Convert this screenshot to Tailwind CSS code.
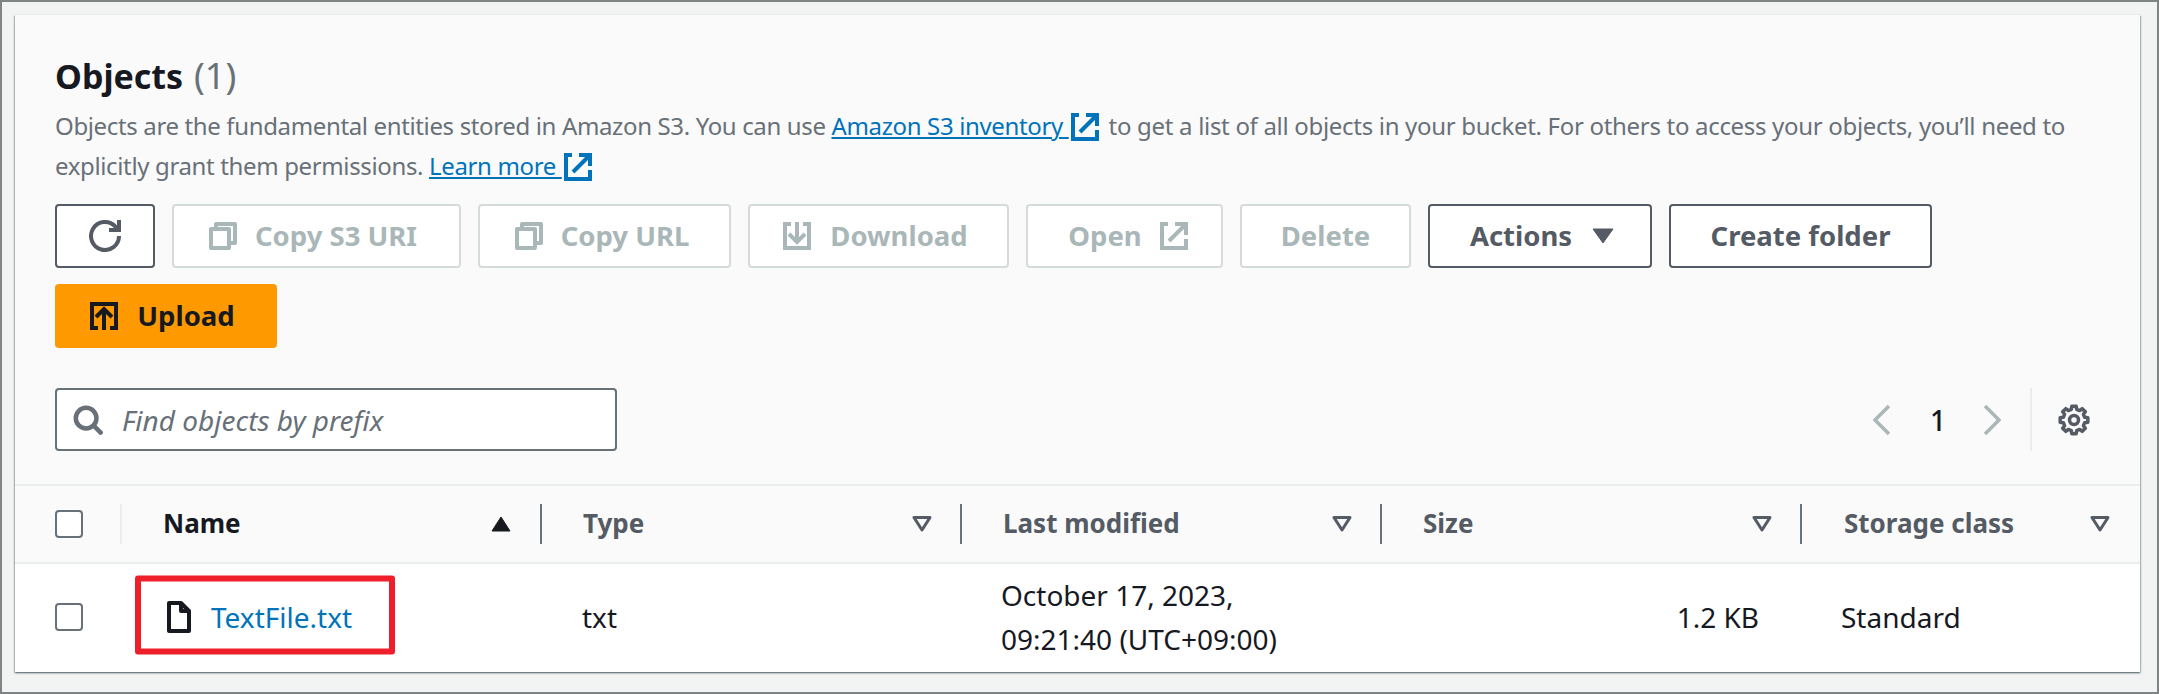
<!DOCTYPE html>
<html lang="en">
<head>
<meta charset="UTF-8">
<title>Objects</title>
<script src="https://cdn.jsdelivr.net/npm/@tailwindcss/browser@4"></script>
</head>
<body class="m-0 overflow-hidden">
<div class="w-[2159px] h-[694px] bg-[#f2f3f3] border-2 border-[#7f8585] pt-[13px] pl-[13px] font-['Noto_Sans',sans-serif] text-[28px] text-[#16191f]">
  <div class="w-[2125px] h-[657px] bg-white shadow-[0_1px_2px_rgba(0,28,36,0.5),1px_1px_1px_rgba(0,28,36,0.15),-1px_1px_1px_rgba(0,28,36,0.15)] flex flex-col">

    <!-- header -->
    <div class="h-[471px] bg-[#fafafa] border-b-2 border-[#eaeded] pt-[39px] px-[40px] flex flex-col shrink-0">
      <h2 class="text-[34px] leading-[44px] font-bold">Objects <span class="ml-[2px] font-normal text-[36px] text-[#687078]">(1)</span></h2>
      <p class="mt-[8px] text-[24px] leading-[40px] tracking-[-0.36px] text-[#687078]">
        Objects are the fundamental entities stored in Amazon S3. You can use <a class="text-[#0073bb] underline decoration-2 underline-offset-2">Amazon S3 inventory </a><svg class="inline-block w-7 h-7 ml-[2px] mr-[4px] align-[-6px] text-[#0073bb]" viewBox="0 0 28 28" fill="none" stroke="currentColor" stroke-width="4"><path d="M8 2H2v24h24v-9M15 2h11v11M26 2 9 19"/></svg> <span class="tracking-[-0.31px]">to get a list of all objects in your bucket. For others to access your objects, you’ll need to</span><br>explicitly grant them permissions. <a class="text-[#0073bb] underline decoration-2 underline-offset-2">Learn more </a><svg class="inline-block w-7 h-7 ml-[2px] align-[-6px] text-[#0073bb]" viewBox="0 0 28 28" fill="none" stroke="currentColor" stroke-width="4"><path d="M8 2H2v24h24v-9M15 2h11v11M26 2 9 19"/></svg>
      </p>

      <div class="mt-[18px] flex flex-wrap gap-x-[17px] gap-y-[16px] text-[27.5px] font-bold">
        <button class="w-[100px] h-[64px] bg-white border-2 border-[#545b64] rounded-[4px] flex items-center justify-center text-[#545b64]">
          <svg class="w-8 h-8" viewBox="0 0 16 16" fill="none" stroke="currentColor" stroke-width="2"><path d="M10 5h5V0"/><path d="M15 8a6.990 6.990 0 1 1-1.890-4.780L15 5"/></svg>
        </button>
        <button class="w-[289px] h-[64px] bg-white border-2 border-[#d5dbdb] rounded-[4px] flex items-center justify-center gap-[18px] pr-[7px] text-[#aab7b8]">
          <svg class="w-7 h-7" viewBox="0 0 28 28" fill="none" stroke="currentColor" stroke-width="4" stroke-linejoin="round"><path d="M2 7h18v19H2zM7 5V2h19v19h-4"/></svg>Copy S3 URI
        </button>
        <button class="w-[253px] h-[64px] bg-white border-2 border-[#d5dbdb] rounded-[4px] flex items-center justify-center gap-[18px] pr-[5px] text-[#aab7b8]">
          <svg class="w-7 h-7" viewBox="0 0 28 28" fill="none" stroke="currentColor" stroke-width="4" stroke-linejoin="round"><path d="M2 7h18v19H2zM7 5V2h19v19h-4"/></svg>Copy URL
        </button>
        <button class="w-[261px] h-[64px] bg-white border-2 border-[#d5dbdb] rounded-[4px] flex items-center justify-center gap-[19px] pr-[6px] text-[#aab7b8]">
          <svg class="w-7 h-7" viewBox="0 0 28 28" fill="none" stroke="currentColor" stroke-width="4"><path d="M8 2H2v24h24V2h-6M6 12l8 8 8-8M14 20V0"/></svg>Download
        </button>
        <button class="w-[197px] h-[64px] bg-white border-2 border-[#d5dbdb] rounded-[4px] flex items-center justify-center gap-[18px] pl-[7px] text-[#aab7b8]">
          Open<svg class="w-7 h-7" viewBox="0 0 28 28" fill="none" stroke="currentColor" stroke-width="4"><path d="M8 2H2v24h24v-9M15 2h11v11M26 2 9 19"/></svg>
        </button>
        <button class="w-[171px] h-[64px] bg-white border-2 border-[#d5dbdb] rounded-[4px] flex items-center justify-center text-[#aab7b8]">Delete</button>
        <button class="w-[224px] h-[64px] bg-white border-2 border-[#545b64] rounded-[4px] flex items-center justify-center gap-[20px] pl-[4px] text-[#545b64]">
          Actions<svg class="w-[22px] h-[16px]" viewBox="0 0 22 16" fill="currentColor"><path d="M1 1h20L11 15z" stroke="currentColor" stroke-linejoin="round"/></svg>
        </button>
        <button class="w-[263px] h-[64px] bg-white border-2 border-[#545b64] rounded-[4px] flex items-center justify-center text-[#545b64]">Create folder</button>
        <button class="w-[222px] h-[64px] bg-[#ff9900] rounded-[4px] flex items-center justify-center gap-[19px] pr-[7px] text-[#16191f]">
          <svg class="w-7 h-7" viewBox="0 0 28 28" fill="none" stroke="currentColor" stroke-width="4"><path d="M8 26H2V2h24v24h-6M6 15l8-8 8 8M14 7v21"/></svg>Upload
        </button>
      </div>

      <div class="mt-[40px] flex items-center justify-between">
        <div class="w-[562px] h-[63px] bg-white border-2 border-[#687078] rounded-[4px] flex items-center pl-[16px] gap-[19px] text-[#687078]">
          <svg class="w-[30px] h-[30px]" viewBox="0 0 16 16" fill="none" stroke="currentColor" stroke-width="2.400"><circle cx="7" cy="7" r="5.500"/><path d="m11 11 4.500 4.500"/></svg>
          <span class="italic text-[28px]">Find objects by prefix</span>
        </div>
        <div class="flex items-center h-[63px] mr-[10px]">
          <svg class="w-[18px] h-[30px] text-[#aab7b8]" viewBox="0 0 18 30" fill="none" stroke="currentColor" stroke-width="3.500"><path d="M16 1 2 15l14 14"/></svg>
          <span class="ml-[39px] w-[14px] text-[28px] font-medium">1</span>
          <svg class="ml-[39px] w-[18px] h-[30px] text-[#aab7b8]" viewBox="0 0 18 30" fill="none" stroke="currentColor" stroke-width="3.500"><path d="m2 1 14 14L2 29"/></svg>
          <div class="ml-[29px] w-[2px] h-[63px] bg-[#eaeded]"></div>
          <svg class="ml-[26px] w-8 h-8 text-[#545b64]" viewBox="0 0 32 32" fill="none" stroke="currentColor" stroke-width="3.500" stroke-linejoin="round"><path d="M13.340 5.330 13.810 2.170H18.190L18.660 5.330 21.670 6.570 24.230 4.670 27.330 7.770 25.430 10.330 26.670 13.340 29.830 13.810V18.190L26.670 18.660 25.430 21.670 27.330 24.230 24.230 27.330 21.670 25.430 18.660 26.670 18.190 29.830H13.810L13.340 26.670 10.330 25.430 7.770 27.330 4.670 24.230 6.570 21.670 5.330 18.660 2.170 18.190V13.810L5.330 13.340 6.570 10.330 4.670 7.770 7.770 4.670 10.330 6.570Z"/><circle cx="16" cy="16" r="4.500"/></svg>
        </div>
      </div>
    </div>

    <!-- table head -->
    <div class="h-[78px] bg-[#fafafa] border-b-2 border-[#eaeded] grid grid-cols-[107px_420px_420px_420px_420px_338px] items-center font-bold text-[26px] shrink-0">
      <div class="h-[40px] flex items-center pl-[40px] border-r-2 border-[#eaeded]">
        <span class="w-[28px] h-[28px] bg-white border-2 border-[#687078] rounded-[4px]"></span>
      </div>
      <div class="h-[40px] flex items-center justify-between pl-[41px] pr-[29px] border-r-2 border-[#687078]">
        <span class="mt-[-2px]">Name</span>
        <svg class="w-[20px] h-[16px]" viewBox="0 0 20 16" fill="currentColor"><path d="M10 1l9 14H1z" stroke="currentColor" stroke-linejoin="round"/></svg>
      </div>
      <div class="h-[40px] flex items-center justify-between pl-[41px] pr-[28px] border-r-2 border-[#687078] text-[#545b64]">
        <span class="mt-[-2px]">Type</span>
        <svg class="w-[20px] h-[16px]" viewBox="0 0 20 16" fill="none" stroke="#545b64" stroke-width="3"><path d="M2 1.500h16L10 14z" stroke-linejoin="round"/></svg>
      </div>
      <div class="h-[40px] flex items-center justify-between pl-[41px] pr-[28px] border-r-2 border-[#687078] text-[#545b64]">
        <span class="mt-[-2px]">Last modified</span>
        <svg class="w-[20px] h-[16px]" viewBox="0 0 20 16" fill="none" stroke="#545b64" stroke-width="3"><path d="M2 1.500h16L10 14z" stroke-linejoin="round"/></svg>
      </div>
      <div class="h-[40px] flex items-center justify-between pl-[41px] pr-[28px] border-r-2 border-[#687078] text-[#545b64]">
        <span class="mt-[-2px]">Size</span>
        <svg class="w-[20px] h-[16px]" viewBox="0 0 20 16" fill="none" stroke="#545b64" stroke-width="3"><path d="M2 1.500h16L10 14z" stroke-linejoin="round"/></svg>
      </div>
      <div class="h-[40px] flex items-center justify-between pl-[42px] pr-[30px] text-[#545b64]">
        <span class="mt-[-2px]">Storage class</span>
        <svg class="w-[20px] h-[16px]" viewBox="0 0 20 16" fill="none" stroke="#545b64" stroke-width="3"><path d="M2 1.500h16L10 14z" stroke-linejoin="round"/></svg>
      </div>
    </div>

    <!-- table row -->
    <div class="flex-1 grid grid-cols-[107px_420px_420px_420px_420px_338px] items-center text-[28px] pb-[2px]">
      <div class="pl-[40px] flex items-center">
        <span class="w-[28px] h-[28px] bg-white border-2 border-[#687078] rounded-[4px]"></span>
      </div>
      <div class="relative flex items-center pl-[45px] gap-[20px]">
        <svg class="w-[24px] h-[32px]" viewBox="0 0 24 32" fill="none" stroke="#16191f" stroke-width="4" stroke-linejoin="round"><path d="M2 2h12l8 8v20H2z"/><path d="M14 2v8h8"/></svg>
        <a class="text-[#0073bb]">TextFile.txt</a>
        <div class="absolute left-[13px] top-1/2 -translate-y-1/2 mt-[-2px] w-[260px] h-[79px] border-[6px] border-[#ee1f2b] rounded-[3px]"></div>
      </div>
      <div class="pl-[40px]">txt</div>
      <div class="pl-[39px] leading-[44px]">October 17, 2023,<br>09:21:40 (UTC+09:00)</div>
      <div class="pr-[43px] text-right">1.2 KB</div>
      <div class="pl-[39px]">Standard</div>
    </div>
  </div>
</div>
</body>
</html>
